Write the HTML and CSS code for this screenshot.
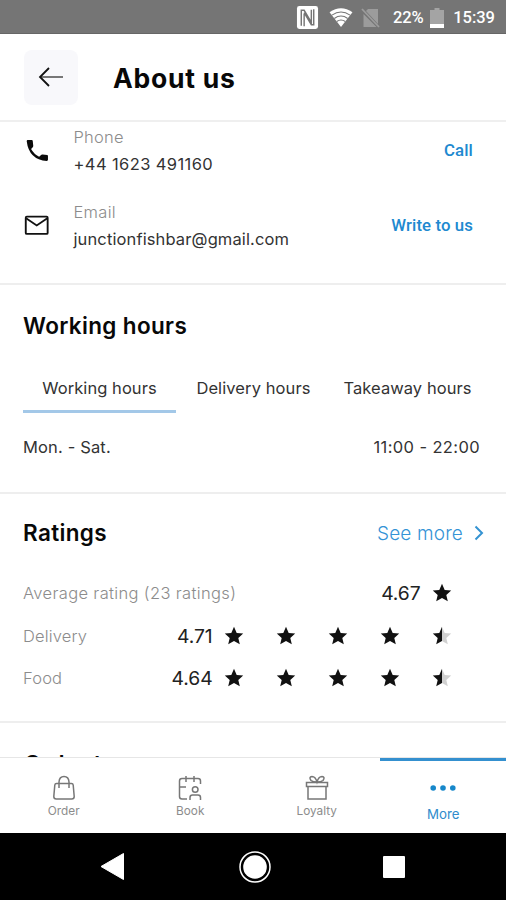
FILE: index.html
```html
<!DOCTYPE html>
<html lang="en">
<head>
<meta charset="utf-8">
<title>About us</title>
<link rel="stylesheet" href="styles.css">
</head>
<body>
<svg width="0" height="0" class="defs">
  <defs>
    <linearGradient id="half"><stop offset=".48" stop-color="#111"/><stop offset=".48" stop-color="#d0d0d0"/></linearGradient>
    <path id="star" d="M10 .8 12.700 7l6.500.6-4.900 4.300 1.500 6.400L10 14.900l-5.800 3.400 1.500-6.400L.8 7.600 7.300 7Z"/>
  </defs>
</svg>
<div class="statusbar">
  <svg class="nfc" viewBox="0 0 24 24"><rect x="1" y="0" width="22" height="24" rx="2.500" fill="#fff"/><path d="M5.500 20.500V4.500h3L16 17V4M8.500 8v13M18.500 3.500v16h-2.500L8.500 7" fill="none" stroke="#757575" stroke-width="1.500"/></svg>
  <svg class="wifi" viewBox="0 0 26 22"><path d="M1 5.500Q13-3 25 5.500L13 21Z" fill="#fff"/><path d="M3.500 8.500q9.500-6.500 19 0M6 12q7-5 14 0M8.500 15.200q4.500-3.200 9 0" fill="none" stroke="#757575" stroke-width="1.100"/></svg>
  <svg class="sim" viewBox="0 0 20 22"><path d="M7 2h10v15L5 4Zm-4.500 5L15.500 20h-13Z" fill="#9c9c9c"/><path d="m1 2 17 18" stroke="#9c9c9c" stroke-width="1.800"/></svg>
  <span class="battery-text">22%</span>
  <svg class="battery" viewBox="0 0 14 20"><path d="M4.500 0h5v2H14v14H0V2h4.500Z" fill="#a4a4a4"/><path d="M0 16h14v4H0Z" fill="#fff"/></svg>
  <span class="clock">15:39</span>
</div>
<header class="header">
  <div class="back"><svg viewBox="0 0 28 22" width="28" height="22"><path d="M3 11h23" stroke="#777" stroke-width="2"/><path d="M12 2 3 11l9 9" fill="none" stroke="#111" stroke-width="1.800"/></svg></div>
  <h1>About us</h1>
</header>
<main class="content">
  <section class="contacts">
    <div class="contact">
      <svg class="cicon phone-icon" viewBox="0 0 24 24"><path d="M3.500 1.500h4q.8 0 .9.800l.5 5q0 .6-.5 1.100L6.800 10q2.800 5 7.700 7.400l2.200-1.800q.5-.4 1.200-.3l4.300.6q.8.200.8 1v3.600q0 1.100-1.100 1.100Q4.800 20.500 2.600 2.700q0-1.200.9-1.200Z" fill="#0a0a0a"/></svg>
      <div class="ctext"><span class="label">Phone</span><span class="value phone">+44 1623 491160</span></div>
      <a class="call">Call</a>
    </div>
    <div class="contact">
      <svg class="cicon" viewBox="0 0 24 24"><rect x="1.700" y="3" width="21" height="16.600" rx="1" fill="none" stroke="#111" stroke-width="1.800"/><path d="m2 4.500 10.200 7L22.400 4.500" fill="none" stroke="#111" stroke-width="1.800"/></svg>
      <div class="ctext"><span class="label mail">Email</span><span class="value">junctionfishbar@gmail.com</span></div>
      <a class="write">Write to us</a>
    </div>
  </section>
  <section class="hours">
    <h2>Working hours</h2>
    <nav class="tabs"><span class="tab active">Working hours</span><span class="tab delivery">Delivery hours</span><span class="tab takeaway">Takeaway hours</span></nav>
    <div class="hoursrow"><span>Mon. - Sat.</span><span class="time">11:00 - 22:00</span></div>
  </section>
  <section class="ratings">
    <div class="rhead"><h2>Ratings</h2><a class="seemore">See more<svg viewBox="0 0 10 16" width="10" height="16"><path d="m1.500 1.500 6.500 6.500-6.500 6.500" fill="none" stroke="#3493d2" stroke-width="2"/></svg></a></div>
    <div class="rrow"><span class="rlabel avg">Average rating (23 ratings)</span><span class="score">4.67</span><span class="stars"><svg viewBox="0 0 20 20"><use href="#star" fill="#111"/></svg></span></div>
    <div class="rrow"><span class="rlabel">Delivery</span><span class="score">4.71</span><span class="stars"><svg viewBox="0 0 20 20"><use href="#star" fill="#111"/></svg><svg viewBox="0 0 20 20"><use href="#star" fill="#111"/></svg><svg viewBox="0 0 20 20"><use href="#star" fill="#111"/></svg><svg viewBox="0 0 20 20"><use href="#star" fill="#111"/></svg><svg viewBox="0 0 20 20"><use href="#star" fill="url(#half)"/></svg></span></div>
    <div class="rrow"><span class="rlabel">Food</span><span class="score">4.64</span><span class="stars"><svg viewBox="0 0 20 20"><use href="#star" fill="#111"/></svg><svg viewBox="0 0 20 20"><use href="#star" fill="#111"/></svg><svg viewBox="0 0 20 20"><use href="#star" fill="#111"/></svg><svg viewBox="0 0 20 20"><use href="#star" fill="#111"/></svg><svg viewBox="0 0 20 20"><use href="#star" fill="url(#half)"/></svg></span></div>
  </section>
  <section class="next"><h2>Order types</h2></section>
</main>
<nav class="bottom">
  <div class="item"><svg viewBox="0 0 24 26"><path d="M4.500 8.500h15q1.500 0 1.700 1.500l1 11.500q0 2.500-2.500 2.500H4.300q-2.500 0-2.500-2.500l1-11.500q.2-1.500 1.700-1.500ZM7 13V7q.3-5.500 5-5.500T17 7v6"/></svg><span class="o">Order</span></div>
  <div class="item"><svg viewBox="0 0 24 26"><path d="M9 24H4q-2.500 0-2.500-2.500V6Q1.500 3.500 4 3.500h16q2.500 0 2.500 2.500v3M8 1v6m8-6v6M1.500 12H8M12 25v-2.500q0-2.500 2.500-2.500H20q2.500 0 2.500 2.500V25"/><circle cx="17.200" cy="14.500" r="2.800"/></svg><span class="b">Book</span></div>
  <div class="item"><svg viewBox="0 0 24 26"><path d="M1.500 7.500h21v4h-21Zm1.500 4h18V24H3ZM12 7Q8 7 6 5.500 3.500 2 7 1.500 10.500 1.500 12 7q1.500-5.500 5-5.500 3.500.5 1 4Q16 7 12 7Z"/></svg><span class="l">Loyalty</span></div>
  <div class="item on"><svg viewBox="0 0 26 26"><g fill="#1687ca" stroke="none"><circle cx="3.200" cy="13" r="2.800"/><circle cx="13" cy="13" r="2.800"/><circle cx="22.800" cy="13" r="2.800"/></g></svg><span class="m">More</span></div>
</nav>
<footer class="android">
  <svg viewBox="0 0 26 30" width="26" height="30"><path d="M1 14.500 23.500 1.500v26Z" fill="#fff" stroke="#fff" stroke-linejoin="round"/></svg>
  <svg viewBox="0 0 34 34" width="34" height="34"><circle cx="17" cy="17" r="15" fill="none" stroke="#fff" stroke-width="1.500"/><circle cx="17" cy="17" r="11.800" fill="#fff"/></svg>
  <svg viewBox="0 0 22 22" width="22" height="22"><rect width="22" height="22" rx="1" fill="#fff"/></svg>
</footer>
</body>
</html>
```
FILE: styles.css
```css
* { box-sizing: border-box; }
body { margin: 0; width: 506px; height: 900px; overflow: hidden; display: flex; flex-direction: column; background: #fff; font-family: Inter, sans-serif; color: #333; }
.defs { position: absolute; }
h1, h2 { margin: 0; font-weight: 600; color: #080808; white-space: nowrap; }
span, a { white-space: nowrap; }
.statusbar { height: 34px; flex: none; background: #757575; border-bottom: 1px solid #666; display: flex; align-items: center; color: #fff; font: 500 16.500px Roboto, sans-serif; padding: 2px 11px 0 296px; }
.nfc { width: 23px; height: 23px; }
.wifi { width: 26px; height: 21px; margin-left: 9px; }
.sim { width: 20px; height: 22px; margin-left: 7px; }
.battery-text { margin-left: 12px; width: 31px; letter-spacing: -.100px; }
.battery { width: 14px; height: 20px; margin-left: 6px; }
.clock { margin-left: auto; }
.header { height: 88px; flex: none; border-bottom: 2px solid #efefef; display: flex; align-items: center; padding-left: 24px; }
.back { width: 54px; height: 55px; border-radius: 8px; background: #f8f8fb; display: grid; place-items: center; }
h1 { font-size: 26.500px; font-weight: 650; line-height: 32px; margin: 2px 0 0 35px; letter-spacing: .750px; }
h2 { font-size: 22.500px; line-height: 28px; letter-spacing: .350px; }
.content { height: 635px; flex: none; overflow: hidden; }
.contacts { height: 163px; border-bottom: 2px solid #eee; padding: 4px 33px 0 24px; }
.contact { height: 75px; display: flex; align-items: flex-start; }
.cicon { width: 25px; height: 26px; margin-top: 12px; }
.ctext { display: flex; flex-direction: column; margin-left: 24.500px; font-size: 16.500px; line-height: 22px; gap: 5px; }
.label { color: #8c8c8c; letter-spacing: .220px; font-weight: 350; }
.mail { letter-spacing: .300px; }
.value { letter-spacing: .120px; }
.phone { letter-spacing: .400px; }
.contact a { margin: 14px 0 0 auto; font: 500 16.800px/21px Roboto, sans-serif; color: #2089d0; letter-spacing: .100px; }
.hours { height: 209px; border-bottom: 2px solid #eee; padding: 27px 26px 0 23px; }
.tabs { display: flex; margin-top: 22px; height: 51px; font-size: 16.500px; }
.tab { width: 153px; flex: none; height: 51px; text-align: center; line-height: 52px; letter-spacing: .060px; }
.delivery { padding-left: 2px; letter-spacing: .100px; }
.takeaway { padding-left: 4px; letter-spacing: .060px; }
.active { border-bottom: 3px solid #a3c8e8; }
.hoursrow { display: flex; justify-content: space-between; margin-top: 22px; line-height: 24px; font-size: 16.500px; letter-spacing: .150px; }
.time { letter-spacing: .380px; }
.ratings { height: 229px; border-bottom: 2px solid #eee; padding: 25px 22px 0 23px; }
.rhead { display: flex; justify-content: space-between; margin-bottom: 25px; }
.seemore { font-size: 19px; line-height: 27px; font-weight: 350; color: #3493d6; display: flex; align-items: center; gap: 11px; letter-spacing: .150px; }
.rrow { display: flex; align-items: center; height: 42.500px; padding-right: 32.500px; }
.rlabel { font-size: 16.500px; color: #8c8c8c; font-weight: 350; letter-spacing: .150px; }
.avg { letter-spacing: .350px; }
.score { font-size: 19.300px; margin-left: auto; color: #222; letter-spacing: -.100px; }
.stars { display: flex; gap: 32px; margin-left: 11px; }
.stars svg { width: 20px; height: 20px; }
.next { padding: 27px 24px 0; }
.bottom { height: 76px; flex: none; border-top: 1px solid #e6e6e6; display: flex; }
.item { width: 126.500px; display: flex; flex-direction: column; align-items: center; padding: 17px 0 0 1px; font-size: 11.800px; color: #8c8c8c; }
.item svg { width: 24px; height: 26px; fill: none; stroke: #777; stroke-width: 1.500; }
.item span { line-height: 16px; margin-top: 2px; }
.on { border-top: 3px solid #3490cf; padding-top: 14px; color: #2f8ccc; }
.on span { margin-top: 5px; font-size: 13.300px; }
.on svg { width: 26px; }
.android { height: 67px; flex: none; background: #000; display: flex; align-items: center; justify-content: space-between; padding: 0 101px 0 100px; }
```
